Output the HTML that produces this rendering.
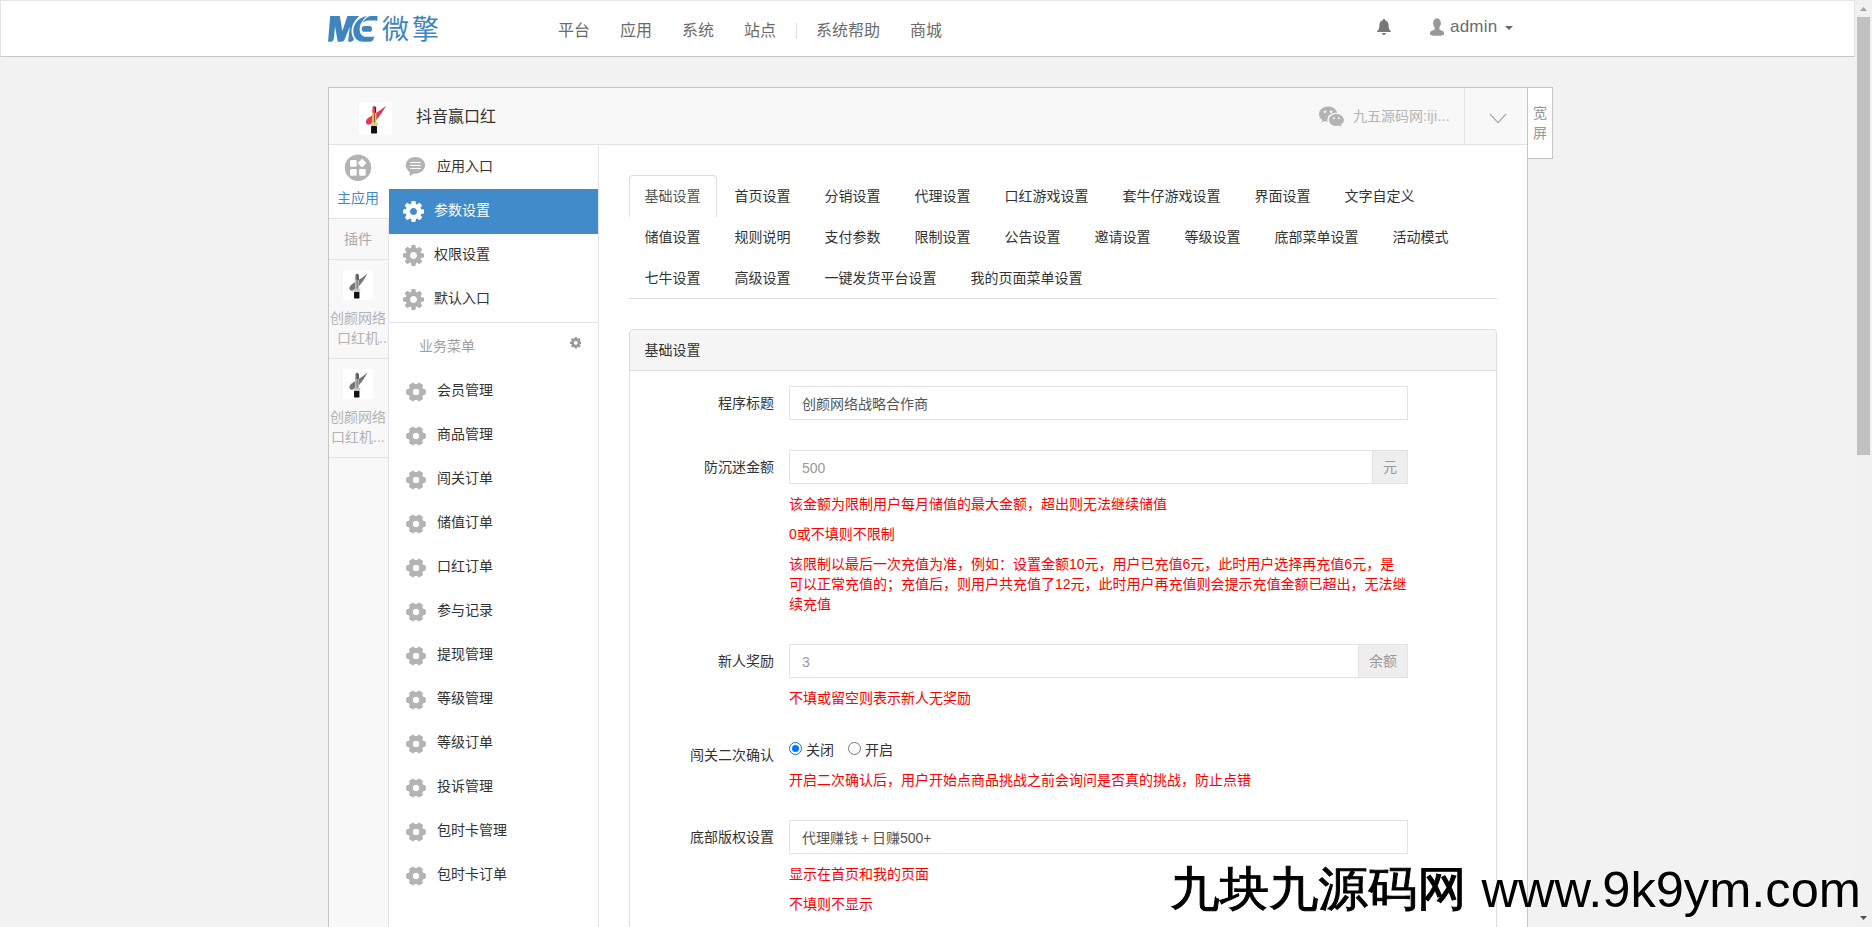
<!DOCTYPE html>
<html lang="zh-CN">
<head>
<meta charset="utf-8">
<title>抖音赢口红 - 参数设置</title>
<style>
*{box-sizing:border-box}
html,body{margin:0;padding:0}
body{width:1872px;height:927px;overflow:hidden;background:#f2f2f2;position:relative;
 font-family:"Liberation Sans","Noto Sans CJK SC",sans-serif;font-size:14px;line-height:20px;color:#333}
.abs{position:absolute}
svg{display:block}
/* navbar */
#nav{left:0;top:0;width:1855px;height:57px;background:#fff;border:1px solid #e4e4e4;border-bottom-color:#c6c6c6}
.navt{position:absolute;top:19.5px;font-size:16px;line-height:22px;color:#6b6b6b;white-space:nowrap}
#brand{left:382px;top:10px;font-size:27px;line-height:40px;color:#4085c0;letter-spacing:3px;white-space:nowrap}
#admin{left:1450px;top:15.5px;font-size:17px;line-height:22px;color:#6b6b6b;letter-spacing:.2px}
/* scrollbar */
#sb{left:1855px;top:0;width:17px;height:927px;background:#f1f1f1}
#sbt{left:1857px;top:17px;width:13px;height:438px;background:#c1c1c1}
/* container */
#wrap{left:328px;top:87px;width:1200px;height:860px;background:#fff;border:1px solid #c6c6c6}
#head{left:329px;top:88px;width:1198px;height:57px;background:#f8f8f8;border-bottom:1px solid #e4e4e8}
#title{left:416px;top:106px;font-size:16px;line-height:22px;color:#333;white-space:nowrap}
#acct{left:1353px;top:106px;font-size:14px;line-height:20px;color:#b4b4b4;white-space:nowrap}
#hsep{left:1464px;top:88px;width:1px;height:56px;background:#e4e4e8}
#wide{left:1527px;top:87px;width:26px;height:72px;background:#fff;border:1px solid #c6c6c6;color:#999;font-size:14px;line-height:19.5px;text-align:center;padding-top:16px}
/* narrow sidebar */
#s1{left:329px;top:145px;width:60px;height:800px;background:#f8f8f8;border-right:1px solid #e4e4e8}
.cell{position:absolute;left:329px;width:59px;border-bottom:1px solid #e4e4e8}
.ptxt{position:absolute;font-size:14px;line-height:20px;color:#b3b3b3;white-space:nowrap}
/* second sidebar */
#s2{left:389px;top:145px;width:210px;height:800px;background:#fff;border-right:1px solid #e4e4e8}
.mi{position:absolute;left:437px;font-size:14px;line-height:20px;color:#333;white-space:nowrap}
.gi{position:absolute;left:405px}
/* tabs */
.tab{position:absolute;font-size:14px;line-height:20px;color:#333;white-space:nowrap}
/* form */
.lbl{position:absolute;right:1098px;font-size:14px;line-height:20px;color:#333;white-space:nowrap;text-align:right}
.inp{word-spacing:-1px;position:absolute;left:789px;width:619px;height:34px;border:1px solid #e4e4e8;background:#fff;padding:7px 12px 5px;font-size:14px;line-height:20px;color:#555;white-space:nowrap}
.ph{color:#999}
.addon{position:absolute;height:34px;background:#eee;border:1px solid #e4e4e8;color:#999;font-size:14px;line-height:20px;padding:6px 0;text-align:center}
.help{position:absolute;left:789px;width:619px;font-size:14px;line-height:20px;color:#f00}
#wm1{left:1170.3px;top:856.6px;font-size:49.4px;line-height:64px;color:#000;white-space:nowrap;font-family:"Liberation Sans","WenQuanYi Zen Hei","Noto Sans CJK SC",sans-serif;-webkit-text-stroke:1px #000;transform:scaleY(.955);transform-origin:0 32px}
#wm2{left:1481.4px;top:857.5px;font-size:50.6px;line-height:64px;color:#000;white-space:nowrap;text-shadow:0 0 1.5px #fff,0 0 1.5px #fff}
</style>
</head>
<body>
<!-- ===== top navbar ===== -->
<div id="nav" class="abs"></div>
<svg class="abs" style="left:326px;top:13px" width="54" height="32" viewBox="0 0 1564 927" fill="#4085c0">
<path d="M120,90 L400,90 L475,520 L620,90 L960,90 C850,200 740,350 740,520 C740,620 770,690 810,750 C790,800 760,830 720,830 L640,830 L690,400 L545,750 C525,800 500,830 450,830 L340,830 L262,390 L228,730 C220,790 190,830 140,830 L60,830 Z"/>
<path d="M1190,90 C1000,110 790,280 790,520 C790,700 900,830 1080,830 L1290,830 C1340,830 1370,790 1400,690 L1160,690 C1050,690 975,600 975,470 C975,330 1060,190 1190,90 Z"/>
<path d="M1490,90 L1300,90 C1200,100 1100,200 1045,300 C1100,245 1150,215 1220,215 L1440,215 L1490,225 Z"/>
<rect x="1035" y="375" width="300" height="170" rx="85"/>
</svg>
<div id="brand" class="abs">微擎</div>
<div class="navt" style="left:558px">平台</div>
<div class="navt" style="left:620px">应用</div>
<div class="navt" style="left:682px">系统</div>
<div class="navt" style="left:744px">站点</div>
<div class="abs" style="left:796px;top:23px;width:1px;height:16px;background:#ddd"></div>
<div class="navt" style="left:816px">系统帮助</div>
<div class="navt" style="left:910px">商城</div>
<!-- bell -->
<svg class="abs" style="left:1377px;top:19px" width="14" height="16" viewBox="0 0 14 16" fill="#777">
<path d="M7,0 C7.7,0 8.2,.5 8.2,1.2 C10.4,1.8 11.6,3.7 11.6,6.2 C11.6,9.6 12.6,11.2 14,12.4 L14,13 L0,13 L0,12.4 C1.4,11.2 2.4,9.6 2.4,6.2 C2.4,3.7 3.6,1.8 5.8,1.2 C5.8,.5 6.3,0 7,0 Z"/>
<path d="M5,14 L9,14 C9,15.1 8.1,16 7,16 C5.9,16 5,15.1 5,14 Z"/>
</svg>
<!-- user -->
<svg class="abs" style="left:1430px;top:18px" width="14" height="18" viewBox="0 0 14 18" fill="#999">
<ellipse cx="7" cy="5.2" rx="3.9" ry="5"/>
<path d="M4.6,8.5 L9.4,8.5 L9.4,11 C9.4,11.6 10,12 10.8,12.3 C12.8,13 14,13.4 14,15.2 L14,16.4 C12,17.6 9.5,17.8 7,17.8 C4.5,17.8 2,17.6 0,16.4 L0,15.2 C0,13.4 1.2,13 3.2,12.3 C4,12 4.6,11.6 4.6,11 Z"/>
</svg>
<div id="admin" class="abs">admin</div>
<svg class="abs" style="left:1505px;top:26px" width="8" height="4" viewBox="0 0 8 4" fill="#666"><path d="M0,0 L8,0 L4,4 Z"/></svg>
<!-- ===== scrollbar ===== -->
<div id="sb" class="abs"></div>
<div id="sbt" class="abs"></div>
<svg class="abs" style="left:1860px;top:7px" width="7" height="4" viewBox="0 0 7 4" fill="#a3a3a3"><path d="M0,4 L3.5,0 L7,4 Z"/></svg>
<svg class="abs" style="left:1860px;top:916px" width="7" height="4" viewBox="0 0 7 4" fill="#505050"><path d="M0,0 L3.5,4 L7,0 Z"/></svg>
<!-- ===== main container ===== -->
<div id="wrap" class="abs"></div>
<div id="head" class="abs"></div>
<div class="abs" style="left:359px;top:102px;width:33px;height:33px;background:#fff;border-radius:4px"></div>
<svg class="abs" style="left:354px;top:98px" width="44" height="41" viewBox="0 0 995 927">
<path d="M720,178 C640,250 520,330 400,400 C330,440 270,480 268,545 C270,600 320,620 380,590 C470,540 560,440 620,350 C660,290 700,230 720,178 Z" fill="#e0395b"/>
<path d="M415,340 L418,215 C425,185 450,175 470,182 L498,215 L500,340 Z" fill="#e2405f"/>
<path d="M470,182 L498,215 L500,340 L478,340 Z" fill="#5a1420"/>
<rect x="410" y="335" width="95" height="230" fill="#e2be6d"/>
<rect x="452" y="335" width="22" height="230" fill="#8a5a14"/>
<rect x="388" y="555" width="150" height="85" rx="12" fill="#e8c77a"/>
<rect x="385" y="635" width="135" height="165" rx="10" fill="#111"/>
</svg>
<div id="title" class="abs">抖音赢口红</div>
<!-- wechat icon -->
<svg class="abs" style="left:1319px;top:106px" width="25" height="21" viewBox="0 0 25 21">
<path d="M9.2,0.6 C4.1,0.6 0,3.9 0,8.2 C0,10.6 1.3,12.7 3.4,14.1 L2.6,16.6 L5.6,15.1 C6.6,15.4 7.6,15.6 8.7,15.7 C8.5,15.1 8.4,14.4 8.4,13.8 C8.4,9.9 12.1,6.8 16.6,6.8 C17.2,6.8 17.7,6.8 18.2,6.9 C17.4,3.3 13.7,0.6 9.2,0.6 Z" fill="#b4b4b4"/>
<path d="M17.4,7.9 C13.3,7.9 10,10.6 10,13.9 C10,17.2 13.3,19.9 17.4,19.9 C18.3,19.9 19.2,19.8 20,19.5 L22.5,20.8 L21.8,18.7 C23.7,17.6 24.9,15.9 24.9,13.9 C24.9,10.6 21.5,7.9 17.4,7.9 Z" fill="#b4b4b4"/>
<circle cx="6.1" cy="5.8" r="1.25" fill="#f8f8f8"/><circle cx="12.1" cy="5.8" r="1.25" fill="#f8f8f8"/>
<circle cx="14.9" cy="12.2" r="1.05" fill="#f8f8f8"/><circle cx="19.9" cy="12.2" r="1.05" fill="#f8f8f8"/>
</svg>
<div id="acct" class="abs">九五源码网<span style="letter-spacing:.3px">:iji...</span></div>
<div id="hsep" class="abs"></div>
<svg class="abs" style="left:1489px;top:113px" width="18" height="11" viewBox="0 0 18 11" fill="none" stroke="#a8a8a8" stroke-width="1.2"><path d="M1,1 L9,9.6 L17,1"/></svg>
<div id="wide" class="abs">宽<br>屏</div>
<!-- ===== narrow sidebar ===== -->
<div id="s1" class="abs"></div>
<div class="abs" style="left:329px;top:145px;width:60px;height:73px;background:#fff"></div>
<div class="cell" style="top:145px;height:74px"></div>
<div class="cell" style="top:219px;height:41px"></div>
<div class="cell" style="top:260px;height:99px"></div>
<div class="cell" style="top:359px;height:99px"></div>
<svg class="abs" style="left:344px;top:154px" width="28" height="28" viewBox="0 0 28 28">
<circle cx="14" cy="13.7" r="13.2" fill="#b3b3b3"/>
<rect x="6.1" y="6.1" width="6.6" height="6.6" rx="1.2" fill="#fff"/>
<rect x="6.1" y="15.1" width="6.6" height="6.6" rx="1.2" fill="#fff"/>
<rect x="15.1" y="15.1" width="6.6" height="6.6" rx="1.2" fill="#fff"/>
<rect x="14.9" y="5.9" width="6.4" height="6.4" rx="1.2" fill="#fff" transform="rotate(45 18.1 9.1)"/>
</svg>
<div class="abs" style="left:337px;top:188px;width:42px;font-size:14px;line-height:20px;color:#428bca;white-space:nowrap">主应用</div>
<div class="ptxt" style="left:344px;top:229px;color:#aaa">插件</div>
<!-- plugin icons (greyscale) -->
<div class="abs" style="left:343px;top:270px;width:30px;height:30px;background:#fff;border-radius:3px"></div>
<svg class="abs" style="left:343px;top:270px" width="30" height="30" viewBox="110 88 748 750">
<path d="M720,178 C640,250 520,330 400,400 C330,440 270,480 268,545 C270,600 320,620 380,590 C470,540 560,440 620,350 C660,290 700,230 720,178 Z" fill="#777"/>
<path d="M415,340 L418,215 C425,185 450,175 470,182 L498,215 L500,340 Z" fill="#7c7c7c"/>
<path d="M470,182 L498,215 L500,340 L478,340 Z" fill="#2a2a2a"/>
<rect x="410" y="335" width="95" height="230" fill="#bdbdbd"/>
<rect x="452" y="335" width="22" height="230" fill="#606060"/>
<rect x="388" y="555" width="150" height="85" rx="12" fill="#c4c4c4"/>
<rect x="385" y="635" width="135" height="165" rx="10" fill="#111"/>
</svg>
<div class="ptxt" style="left:330px;top:308px">创颜网络</div>
<div class="abs" style="left:329px;top:328px;width:59px;height:20px;overflow:hidden"><div class="ptxt" style="left:8px;top:0">口红机...</div></div>
<div class="abs" style="left:343px;top:369px;width:30px;height:30px;background:#fff;border-radius:3px"></div>
<svg class="abs" style="left:343px;top:369px" width="30" height="30" viewBox="110 88 748 750">
<path d="M720,178 C640,250 520,330 400,400 C330,440 270,480 268,545 C270,600 320,620 380,590 C470,540 560,440 620,350 C660,290 700,230 720,178 Z" fill="#777"/>
<path d="M415,340 L418,215 C425,185 450,175 470,182 L498,215 L500,340 Z" fill="#7c7c7c"/>
<path d="M470,182 L498,215 L500,340 L478,340 Z" fill="#2a2a2a"/>
<rect x="410" y="335" width="95" height="230" fill="#bdbdbd"/>
<rect x="452" y="335" width="22" height="230" fill="#606060"/>
<rect x="388" y="555" width="150" height="85" rx="12" fill="#c4c4c4"/>
<rect x="385" y="635" width="135" height="165" rx="10" fill="#111"/>
</svg>
<div class="ptxt" style="left:330px;top:407px">创颜网络</div>
<div class="ptxt" style="left:331px;top:427px">口红机...</div>
<!-- ===== second sidebar ===== -->
<div id="s2" class="abs"></div>
<svg class="abs" style="left:405px;top:156px" width="21" height="21" viewBox="0 0 21 21">
<ellipse cx="10.4" cy="9.3" rx="9.7" ry="8.4" fill="#b3b3b3"/>
<path d="M4.6,14 L4.9,20.3 L10.6,16.6 Z" fill="#b3b3b3"/>
<rect x="5.2" y="5.9" width="10.6" height="1.1" fill="#fff"/><rect x="5.2" y="8.9" width="10.6" height="1.1" fill="#fff"/><rect x="5.2" y="11.9" width="10.6" height="1.1" fill="#fff"/>
</svg>
<div class="mi" style="top:156px">应用入口</div>
<div class="abs" style="left:389px;top:189px;width:209px;height:44.5px;background:#428bca"></div>
<svg class="abs" style="left:403.2px;top:200.9px" width="21" height="21" viewBox="128 128 1536 1536" fill="#fff"><path d="M1152 896q0-106-75-181t-181-75-181 75-75 181 75 181 181 75 181-75 75-181zm512-109v222q0 12-8 23t-20 13l-185 28q-19 54-39 91 35 50 107 138 10 12 10 25t-9 23q-27 37-99 108t-94 71q-12 0-26-9l-138-108q-44 23-91 38-16 136-29 186-7 28-36 28h-222q-14 0-24.500-8.500t-11.500-21.500l-28-184q-49-16-90-37l-141 107q-10 9-25 9-14 0-25-11-126-114-165-168-7-10-7-23 0-12 8-23 15-21 51-66.500t54-70.500q-27-50-41-99l-183-27q-13-2-21-12.500t-8-23.500v-222q0-12 8-23t19-13l186-28q14-46 39-92-40-57-107-138-10-12-10-24 0-10 9-23 26-36 98.500-107.500t94.500-71.500q13 0 26 10l138 107q44-23 91-38 16-136 29-186 7-28 36-28h222q14 0 24.500 8.500t11.500 21.500l28 184q49 16 90 37l142-107q9-9 24-9 13 0 25 10 129 119 165 170 7 8 7 22 0 12-8 23-15 21-51 66.500t-54 70.500q26 50 41 98l183 28q13 2 21 12.500t8 23.500z"/></svg>
<div class="mi" style="left:434px;top:200px;color:#fff">参数设置</div>
<svg class="abs" style="left:403.2px;top:244.9px" width="21" height="21" viewBox="128 128 1536 1536" fill="#b0b0b0"><path d="M1152 896q0-106-75-181t-181-75-181 75-75 181 75 181 181 75 181-75 75-181zm512-109v222q0 12-8 23t-20 13l-185 28q-19 54-39 91 35 50 107 138 10 12 10 25t-9 23q-27 37-99 108t-94 71q-12 0-26-9l-138-108q-44 23-91 38-16 136-29 186-7 28-36 28h-222q-14 0-24.500-8.500t-11.500-21.500l-28-184q-49-16-90-37l-141 107q-10 9-25 9-14 0-25-11-126-114-165-168-7-10-7-23 0-12 8-23 15-21 51-66.500t54-70.500q-27-50-41-99l-183-27q-13-2-21-12.500t-8-23.500v-222q0-12 8-23t19-13l186-28q14-46 39-92-40-57-107-138-10-12-10-24 0-10 9-23 26-36 98.500-107.500t94.500-71.500q13 0 26 10l138 107q44-23 91-38 16-136 29-186 7-28 36-28h222q14 0 24.500 8.500t11.500 21.500l28 184q49 16 90 37l142-107q9-9 24-9 13 0 25 10 129 119 165 170 7 8 7 22 0 12-8 23-15 21-51 66.500t-54 70.500q26 50 41 98l183 28q13 2 21 12.500t8 23.500z"/></svg>
<div class="mi" style="left:434px;top:244px">权限设置</div>
<svg class="abs" style="left:403.2px;top:288.9px" width="21" height="21" viewBox="128 128 1536 1536" fill="#b0b0b0"><path d="M1152 896q0-106-75-181t-181-75-181 75-75 181 75 181 181 75 181-75 75-181zm512-109v222q0 12-8 23t-20 13l-185 28q-19 54-39 91 35 50 107 138 10 12 10 25t-9 23q-27 37-99 108t-94 71q-12 0-26-9l-138-108q-44 23-91 38-16 136-29 186-7 28-36 28h-222q-14 0-24.500-8.500t-11.500-21.500l-28-184q-49-16-90-37l-141 107q-10 9-25 9-14 0-25-11-126-114-165-168-7-10-7-23 0-12 8-23 15-21 51-66.500t54-70.500q-27-50-41-99l-183-27q-13-2-21-12.500t-8-23.500v-222q0-12 8-23t19-13l186-28q14-46 39-92-40-57-107-138-10-12-10-24 0-10 9-23 26-36 98.500-107.500t94.500-71.500q13 0 26 10l138 107q44-23 91-38 16-136 29-186 7-28 36-28h222q14 0 24.500 8.500t11.500 21.500l28 184q49 16 90 37l142-107q9-9 24-9 13 0 25 10 129 119 165 170 7 8 7 22 0 12-8 23-15 21-51 66.500t-54 70.500q26 50 41 98l183 28q13 2 21 12.500t8 23.500z"/></svg>
<div class="mi" style="left:434px;top:288px">默认入口</div>
<div class="abs" style="left:389px;top:322px;width:209px;height:1px;background:#e4e4e8"></div>
<div class="mi" style="left:419px;top:336px;color:#a0a0a0">业务菜单</div>
<svg class="abs" style="left:569.8px;top:337.3px" width="11.6" height="11.6" viewBox="128 128 1536 1536" fill="#999"><path d="M1152 896q0-106-75-181t-181-75-181 75-75 181 75 181 181 75 181-75 75-181zm512-109v222q0 12-8 23t-20 13l-185 28q-19 54-39 91 35 50 107 138 10 12 10 25t-9 23q-27 37-99 108t-94 71q-12 0-26-9l-138-108q-44 23-91 38-16 136-29 186-7 28-36 28h-222q-14 0-24.500-8.500t-11.500-21.500l-28-184q-49-16-90-37l-141 107q-10 9-25 9-14 0-25-11-126-114-165-168-7-10-7-23 0-12 8-23 15-21 51-66.500t54-70.500q-27-50-41-99l-183-27q-13-2-21-12.500t-8-23.500v-222q0-12 8-23t19-13l186-28q14-46 39-92-40-57-107-138-10-12-10-24 0-10 9-23 26-36 98.500-107.500t94.500-71.500q13 0 26 10l138 107q44-23 91-38 16-136 29-186 7-28 36-28h222q14 0 24.500 8.500t11.500 21.500l28 184q49 16 90 37l142-107q9-9 24-9 13 0 25 10 129 119 165 170 7 8 7 22 0 12-8 23-15 21-51 66.500t-54 70.500q26 50 41 98l183 28q13 2 21 12.500t8 23.500z"/></svg>
<svg class="abs" style="left:405.7px;top:381.5px" width="20" height="20" viewBox="0 0 20 20" fill="#b3b3b3" fill-rule="evenodd" stroke="#b3b3b3" stroke-width="1" stroke-linejoin="round"><path d="M16.97,7.24 L19.27,7.93 L19.27,12.07 L16.97,12.76 L15.88,14.66 L16.43,16.99 L12.84,19.07 L11.10,17.42 L8.90,17.42 L7.16,19.07 L3.57,16.99 L4.12,14.66 L3.03,12.76 L0.73,12.07 L0.73,7.93 L3.03,7.24 L4.12,5.34 L3.57,3.01 L7.16,0.93 L8.90,2.58 L11.10,2.58 L12.84,0.93 L16.43,3.01 L15.88,5.34Z M6.25,10.00 a3.75,3.75 0 1,0 7.50,0 a3.75,3.75 0 1,0 -7.50,0Z"/></svg>
<div class="mi" style="top:380px">会员管理</div>
<svg class="abs" style="left:405.7px;top:425.5px" width="20" height="20" viewBox="0 0 20 20" fill="#b3b3b3" fill-rule="evenodd" stroke="#b3b3b3" stroke-width="1" stroke-linejoin="round"><path d="M16.97,7.24 L19.27,7.93 L19.27,12.07 L16.97,12.76 L15.88,14.66 L16.43,16.99 L12.84,19.07 L11.10,17.42 L8.90,17.42 L7.16,19.07 L3.57,16.99 L4.12,14.66 L3.03,12.76 L0.73,12.07 L0.73,7.93 L3.03,7.24 L4.12,5.34 L3.57,3.01 L7.16,0.93 L8.90,2.58 L11.10,2.58 L12.84,0.93 L16.43,3.01 L15.88,5.34Z M6.25,10.00 a3.75,3.75 0 1,0 7.50,0 a3.75,3.75 0 1,0 -7.50,0Z"/></svg>
<div class="mi" style="top:424px">商品管理</div>
<svg class="abs" style="left:405.7px;top:469.5px" width="20" height="20" viewBox="0 0 20 20" fill="#b3b3b3" fill-rule="evenodd" stroke="#b3b3b3" stroke-width="1" stroke-linejoin="round"><path d="M16.97,7.24 L19.27,7.93 L19.27,12.07 L16.97,12.76 L15.88,14.66 L16.43,16.99 L12.84,19.07 L11.10,17.42 L8.90,17.42 L7.16,19.07 L3.57,16.99 L4.12,14.66 L3.03,12.76 L0.73,12.07 L0.73,7.93 L3.03,7.24 L4.12,5.34 L3.57,3.01 L7.16,0.93 L8.90,2.58 L11.10,2.58 L12.84,0.93 L16.43,3.01 L15.88,5.34Z M6.25,10.00 a3.75,3.75 0 1,0 7.50,0 a3.75,3.75 0 1,0 -7.50,0Z"/></svg>
<div class="mi" style="top:468px">闯关订单</div>
<svg class="abs" style="left:405.7px;top:513.5px" width="20" height="20" viewBox="0 0 20 20" fill="#b3b3b3" fill-rule="evenodd" stroke="#b3b3b3" stroke-width="1" stroke-linejoin="round"><path d="M16.97,7.24 L19.27,7.93 L19.27,12.07 L16.97,12.76 L15.88,14.66 L16.43,16.99 L12.84,19.07 L11.10,17.42 L8.90,17.42 L7.16,19.07 L3.57,16.99 L4.12,14.66 L3.03,12.76 L0.73,12.07 L0.73,7.93 L3.03,7.24 L4.12,5.34 L3.57,3.01 L7.16,0.93 L8.90,2.58 L11.10,2.58 L12.84,0.93 L16.43,3.01 L15.88,5.34Z M6.25,10.00 a3.75,3.75 0 1,0 7.50,0 a3.75,3.75 0 1,0 -7.50,0Z"/></svg>
<div class="mi" style="top:512px">储值订单</div>
<svg class="abs" style="left:405.7px;top:557.5px" width="20" height="20" viewBox="0 0 20 20" fill="#b3b3b3" fill-rule="evenodd" stroke="#b3b3b3" stroke-width="1" stroke-linejoin="round"><path d="M16.97,7.24 L19.27,7.93 L19.27,12.07 L16.97,12.76 L15.88,14.66 L16.43,16.99 L12.84,19.07 L11.10,17.42 L8.90,17.42 L7.16,19.07 L3.57,16.99 L4.12,14.66 L3.03,12.76 L0.73,12.07 L0.73,7.93 L3.03,7.24 L4.12,5.34 L3.57,3.01 L7.16,0.93 L8.90,2.58 L11.10,2.58 L12.84,0.93 L16.43,3.01 L15.88,5.34Z M6.25,10.00 a3.75,3.75 0 1,0 7.50,0 a3.75,3.75 0 1,0 -7.50,0Z"/></svg>
<div class="mi" style="top:556px">口红订单</div>
<svg class="abs" style="left:405.7px;top:601.5px" width="20" height="20" viewBox="0 0 20 20" fill="#b3b3b3" fill-rule="evenodd" stroke="#b3b3b3" stroke-width="1" stroke-linejoin="round"><path d="M16.97,7.24 L19.27,7.93 L19.27,12.07 L16.97,12.76 L15.88,14.66 L16.43,16.99 L12.84,19.07 L11.10,17.42 L8.90,17.42 L7.16,19.07 L3.57,16.99 L4.12,14.66 L3.03,12.76 L0.73,12.07 L0.73,7.93 L3.03,7.24 L4.12,5.34 L3.57,3.01 L7.16,0.93 L8.90,2.58 L11.10,2.58 L12.84,0.93 L16.43,3.01 L15.88,5.34Z M6.25,10.00 a3.75,3.75 0 1,0 7.50,0 a3.75,3.75 0 1,0 -7.50,0Z"/></svg>
<div class="mi" style="top:600px">参与记录</div>
<svg class="abs" style="left:405.7px;top:645.5px" width="20" height="20" viewBox="0 0 20 20" fill="#b3b3b3" fill-rule="evenodd" stroke="#b3b3b3" stroke-width="1" stroke-linejoin="round"><path d="M16.97,7.24 L19.27,7.93 L19.27,12.07 L16.97,12.76 L15.88,14.66 L16.43,16.99 L12.84,19.07 L11.10,17.42 L8.90,17.42 L7.16,19.07 L3.57,16.99 L4.12,14.66 L3.03,12.76 L0.73,12.07 L0.73,7.93 L3.03,7.24 L4.12,5.34 L3.57,3.01 L7.16,0.93 L8.90,2.58 L11.10,2.58 L12.84,0.93 L16.43,3.01 L15.88,5.34Z M6.25,10.00 a3.75,3.75 0 1,0 7.50,0 a3.75,3.75 0 1,0 -7.50,0Z"/></svg>
<div class="mi" style="top:644px">提现管理</div>
<svg class="abs" style="left:405.7px;top:689.5px" width="20" height="20" viewBox="0 0 20 20" fill="#b3b3b3" fill-rule="evenodd" stroke="#b3b3b3" stroke-width="1" stroke-linejoin="round"><path d="M16.97,7.24 L19.27,7.93 L19.27,12.07 L16.97,12.76 L15.88,14.66 L16.43,16.99 L12.84,19.07 L11.10,17.42 L8.90,17.42 L7.16,19.07 L3.57,16.99 L4.12,14.66 L3.03,12.76 L0.73,12.07 L0.73,7.93 L3.03,7.24 L4.12,5.34 L3.57,3.01 L7.16,0.93 L8.90,2.58 L11.10,2.58 L12.84,0.93 L16.43,3.01 L15.88,5.34Z M6.25,10.00 a3.75,3.75 0 1,0 7.50,0 a3.75,3.75 0 1,0 -7.50,0Z"/></svg>
<div class="mi" style="top:688px">等级管理</div>
<svg class="abs" style="left:405.7px;top:733.5px" width="20" height="20" viewBox="0 0 20 20" fill="#b3b3b3" fill-rule="evenodd" stroke="#b3b3b3" stroke-width="1" stroke-linejoin="round"><path d="M16.97,7.24 L19.27,7.93 L19.27,12.07 L16.97,12.76 L15.88,14.66 L16.43,16.99 L12.84,19.07 L11.10,17.42 L8.90,17.42 L7.16,19.07 L3.57,16.99 L4.12,14.66 L3.03,12.76 L0.73,12.07 L0.73,7.93 L3.03,7.24 L4.12,5.34 L3.57,3.01 L7.16,0.93 L8.90,2.58 L11.10,2.58 L12.84,0.93 L16.43,3.01 L15.88,5.34Z M6.25,10.00 a3.75,3.75 0 1,0 7.50,0 a3.75,3.75 0 1,0 -7.50,0Z"/></svg>
<div class="mi" style="top:732px">等级订单</div>
<svg class="abs" style="left:405.7px;top:777.5px" width="20" height="20" viewBox="0 0 20 20" fill="#b3b3b3" fill-rule="evenodd" stroke="#b3b3b3" stroke-width="1" stroke-linejoin="round"><path d="M16.97,7.24 L19.27,7.93 L19.27,12.07 L16.97,12.76 L15.88,14.66 L16.43,16.99 L12.84,19.07 L11.10,17.42 L8.90,17.42 L7.16,19.07 L3.57,16.99 L4.12,14.66 L3.03,12.76 L0.73,12.07 L0.73,7.93 L3.03,7.24 L4.12,5.34 L3.57,3.01 L7.16,0.93 L8.90,2.58 L11.10,2.58 L12.84,0.93 L16.43,3.01 L15.88,5.34Z M6.25,10.00 a3.75,3.75 0 1,0 7.50,0 a3.75,3.75 0 1,0 -7.50,0Z"/></svg>
<div class="mi" style="top:776px">投诉管理</div>
<svg class="abs" style="left:405.7px;top:821.5px" width="20" height="20" viewBox="0 0 20 20" fill="#b3b3b3" fill-rule="evenodd" stroke="#b3b3b3" stroke-width="1" stroke-linejoin="round"><path d="M16.97,7.24 L19.27,7.93 L19.27,12.07 L16.97,12.76 L15.88,14.66 L16.43,16.99 L12.84,19.07 L11.10,17.42 L8.90,17.42 L7.16,19.07 L3.57,16.99 L4.12,14.66 L3.03,12.76 L0.73,12.07 L0.73,7.93 L3.03,7.24 L4.12,5.34 L3.57,3.01 L7.16,0.93 L8.90,2.58 L11.10,2.58 L12.84,0.93 L16.43,3.01 L15.88,5.34Z M6.25,10.00 a3.75,3.75 0 1,0 7.50,0 a3.75,3.75 0 1,0 -7.50,0Z"/></svg>
<div class="mi" style="top:820px">包时卡管理</div>
<svg class="abs" style="left:405.7px;top:865.5px" width="20" height="20" viewBox="0 0 20 20" fill="#b3b3b3" fill-rule="evenodd" stroke="#b3b3b3" stroke-width="1" stroke-linejoin="round"><path d="M16.97,7.24 L19.27,7.93 L19.27,12.07 L16.97,12.76 L15.88,14.66 L16.43,16.99 L12.84,19.07 L11.10,17.42 L8.90,17.42 L7.16,19.07 L3.57,16.99 L4.12,14.66 L3.03,12.76 L0.73,12.07 L0.73,7.93 L3.03,7.24 L4.12,5.34 L3.57,3.01 L7.16,0.93 L8.90,2.58 L11.10,2.58 L12.84,0.93 L16.43,3.01 L15.88,5.34Z M6.25,10.00 a3.75,3.75 0 1,0 7.50,0 a3.75,3.75 0 1,0 -7.50,0Z"/></svg>
<div class="mi" style="top:864px">包时卡订单</div>
<!-- ===== content ===== -->
<div class="abs" style="left:629px;top:298px;width:868px;height:1px;background:#ddd"></div>
<div class="abs" style="left:629px;top:175px;width:88px;height:42px;border:1px solid #ddd;border-bottom:0;border-radius:4px 4px 0 0;background:#fff"></div>
<div class="tab" style="left:644.5px;top:186px;color:#555">基础设置</div>
<div class="tab" style="left:734.5px;top:186px;color:#333">首页设置</div>
<div class="tab" style="left:824.5px;top:186px;color:#333">分销设置</div>
<div class="tab" style="left:914.5px;top:186px;color:#333">代理设置</div>
<div class="tab" style="left:1004.5px;top:186px;color:#333">口红游戏设置</div>
<div class="tab" style="left:1122.5px;top:186px;color:#333">套牛仔游戏设置</div>
<div class="tab" style="left:1254.5px;top:186px;color:#333">界面设置</div>
<div class="tab" style="left:1344.5px;top:186px;color:#333">文字自定义</div>
<div class="tab" style="left:644.5px;top:227px;color:#333">储值设置</div>
<div class="tab" style="left:734.5px;top:227px;color:#333">规则说明</div>
<div class="tab" style="left:824.5px;top:227px;color:#333">支付参数</div>
<div class="tab" style="left:914.5px;top:227px;color:#333">限制设置</div>
<div class="tab" style="left:1004.5px;top:227px;color:#333">公告设置</div>
<div class="tab" style="left:1094.5px;top:227px;color:#333">邀请设置</div>
<div class="tab" style="left:1184.5px;top:227px;color:#333">等级设置</div>
<div class="tab" style="left:1274.5px;top:227px;color:#333">底部菜单设置</div>
<div class="tab" style="left:1392.5px;top:227px;color:#333">活动模式</div>
<div class="tab" style="left:644.5px;top:268px;color:#333">七牛设置</div>
<div class="tab" style="left:734.5px;top:268px;color:#333">高级设置</div>
<div class="tab" style="left:824.5px;top:268px;color:#333">一键发货平台设置</div>
<div class="tab" style="left:970.5px;top:268px;color:#333">我的页面菜单设置</div>
<div class="abs" style="left:629px;top:329px;width:868px;height:620px;border:1px solid #ddd;border-radius:4px;background:#fff"></div>
<div class="abs" style="left:630px;top:330px;width:866px;height:41px;background:#f5f5f5;border-bottom:1px solid #ddd;border-radius:3px 3px 0 0"></div>
<div class="tab" style="left:644.5px;top:340px">基础设置</div>
<div class="lbl" style="top:393px">程序标题</div>
<div class="inp" style="top:386px">创颜网络战略合作商</div>
<div class="lbl" style="top:457px">防沉迷金额</div>
<div class="inp" style="top:450px;width:584px"><span class="ph">500</span></div>
<div class="addon" style="left:1372px;top:450px;width:36px">元</div>
<div class="help" style="top:494px">该金额为限制用户每月储值的最大金额，超出则无法继续储值</div>
<div class="help" style="top:524px">0或不填则不限制</div>
<div class="help" style="top:554px">该限制以最后一次充值为准，例如：设置金额10元，用户已充值6元，此时用户选择再充值6元，是<br>可以正常充值的；充值后，则用户共充值了12元，此时用户再充值则会提示充值金额已超出，无法继<br>续充值</div>
<div class="lbl" style="top:651px">新人奖励</div>
<div class="inp" style="top:644px;width:570px"><span class="ph">3</span></div>
<div class="addon" style="left:1358px;top:644px;width:50px">余额</div>
<div class="help" style="top:688px">不填或留空则表示新人无奖励</div>
<div class="lbl" style="top:745px">闯关二次确认</div>
<div class="abs" style="left:789px;top:742px;width:13px;height:13px;border-radius:50%;border:1.5px solid #0075ff;background:#fff"></div>
<div class="abs" style="left:792px;top:745px;width:7px;height:7px;border-radius:50%;background:#0075ff"></div>
<div class="tab" style="left:806px;top:740px">关闭</div>
<div class="abs" style="left:848px;top:742px;width:13px;height:13px;border-radius:50%;border:1px solid #767676;background:#fff"></div>
<div class="tab" style="left:865px;top:740px">开启</div>
<div class="help" style="top:770px">开启二次确认后，用户开始点商品挑战之前会询问是否真的挑战，防止点错</div>
<div class="lbl" style="top:827px">底部版权设置</div>
<div class="inp" style="top:820px">代理赚钱 + 日赚500+</div>
<div class="help" style="top:864px">显示在首页和我的页面</div>
<div class="help" style="top:894px">不填则不显示</div>
<!-- watermark -->
<div id="wm1" class="abs">九块九源码网</div><div id="wm2" class="abs">www.9k9ym.com</div>
</body>
</html>
